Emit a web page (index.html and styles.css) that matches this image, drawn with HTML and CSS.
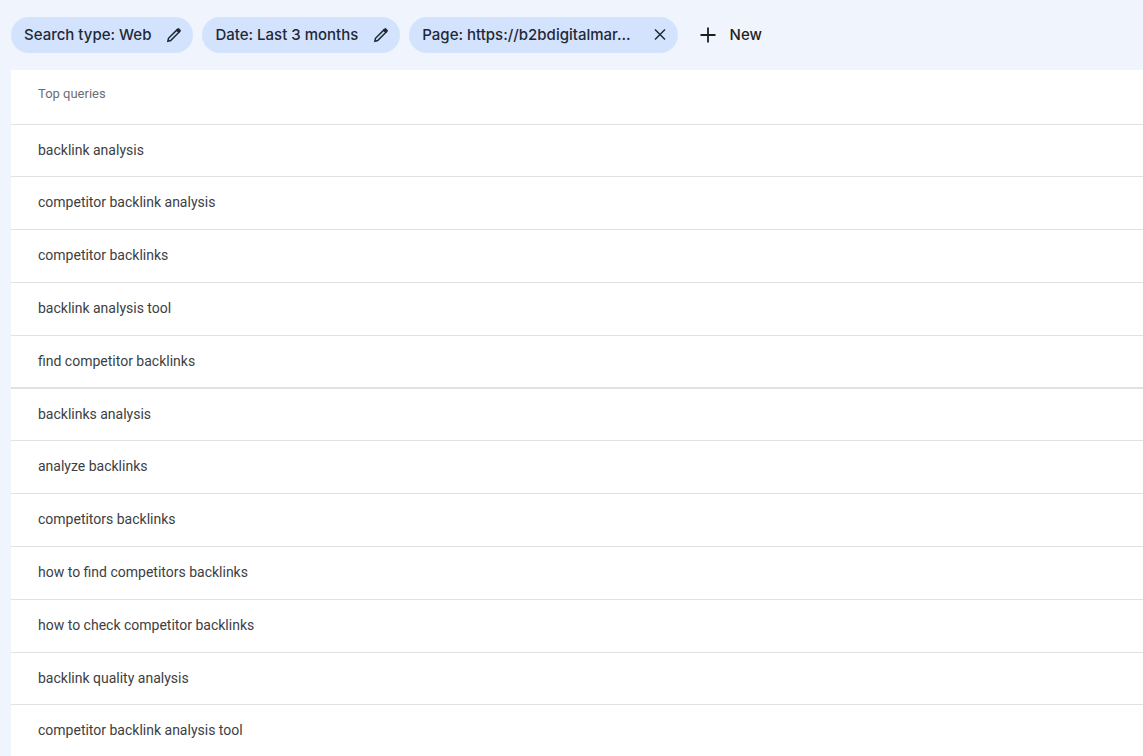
FILE: index.html
```
<!DOCTYPE html>
<html lang="en">
<head>
<meta charset="utf-8">
<meta name="viewport" content="width=device-width, initial-scale=1">
<title>Top queries</title>
<link rel="stylesheet" href="styles.css">
</head>
<body>
<header class="filters">
  <button class="chip" type="button">
    <span class="chip-label">Search type: Web</span>
    <svg class="icon icon-edit" viewBox="0 0 16 16" aria-hidden="true"><path class="stroke" d="M1.9 14.2l.6-2.9 8.2-8.2 2.2 2.2-8.2 8.2z"/><path d="M9.9 2.9l1.6-1.5q.8-.7 1.6 0l1.5 1.5q.7.8 0 1.6l-1.5 1.6z"/></svg>
  </button>
  <button class="chip" type="button">
    <span class="chip-label">Date: Last 3 months</span>
    <svg class="icon icon-edit" viewBox="0 0 16 16" aria-hidden="true"><path class="stroke" d="M1.9 14.2l.6-2.9 8.2-8.2 2.2 2.2-8.2 8.2z"/><path d="M9.9 2.9l1.6-1.5q.8-.7 1.6 0l1.5 1.5q.7.8 0 1.6l-1.5 1.6z"/></svg>
  </button>
  <button class="chip chip-page" type="button">
    <span class="chip-label">Page: https://b2bdigitalmar...</span>
    <svg class="icon" viewBox="0 0 18 18" aria-hidden="true"><path class="stroke" d="M4 3.5l10 10M14 3.5l-10 10"/></svg>
  </button>
  <button class="add" type="button">
    <svg class="icon" viewBox="0 0 18 18" aria-hidden="true"><path class="stroke plus" d="M9 1.5v15M1.5 9h15"/></svg>
    <span>New</span>
  </button>
</header>
<main class="panel">
  <table class="queries">
    <thead><tr><th scope="col">Top queries</th></tr></thead>
    <tbody>
      <tr><td>backlink analysis</td></tr>
      <tr><td>competitor backlink analysis</td></tr>
      <tr><td>competitor backlinks</td></tr>
      <tr><td>backlink analysis tool</td></tr>
      <tr class="group-end"><td>find competitor backlinks</td></tr>
      <tr><td>backlinks analysis</td></tr>
      <tr><td>analyze backlinks</td></tr>
      <tr><td>competitors backlinks</td></tr>
      <tr><td>how to find competitors backlinks</td></tr>
      <tr><td>how to check competitor backlinks</td></tr>
      <tr><td>backlink quality analysis</td></tr>
      <tr><td>competitor backlink analysis tool</td></tr>
    </tbody>
  </table>
</main>
</body>
</html>
```
FILE: styles.css
```
* {
  box-sizing: border-box;
}

body {
  margin: 0;
  background: #f0f4fc;
  color: #3c4043;
  font-family: Roboto, "Liberation Sans", sans-serif;
}

.filters {
  display: flex;
  align-items: center;
  gap: 9px;
  padding: 17px 11px;
}

.chip,
.add {
  display: flex;
  align-items: center;
  height: 36px;
  border: 0;
  color: #1f2937;
  font: 500 15px/20px Inter, Roboto, sans-serif;
  white-space: nowrap;
  cursor: pointer;
}

.chip {
  gap: 15px;
  padding: 0 11px 0 13px;
  border-radius: 18px;
  background: #d3e3fd;
}

.chip-page {
  gap: 20px;
  padding-right: 9px;
}

.add {
  gap: 13px;
  padding: 0 12px;
  background: transparent;
  color: #1f1f1f;
}

.icon {
  flex: none;
  width: 18px;
  height: 18px;
  fill: currentColor;
}

.icon-edit {
  width: 16px;
  height: 16px;
}

.stroke {
  fill: none;
  stroke: currentColor;
  stroke-width: 1.5;
}

.plus {
  stroke-width: 1.8;
}

.panel {
  margin-left: 11px;
  overflow: hidden;
  background: #fff;
}

.queries {
  width: 100%;
  border-collapse: separate;
  border-spacing: 0;
  text-align: left;
}

.queries th,
.queries td {
  height: 53px;
  padding: 0 27px 2px;
  border-bottom: 1px solid #dfe1e3;
  font-size: 14px;
  line-height: 20px;
}

.queries th {
  height: 55px;
  padding-bottom: 6px;
  color: #6b6f73;
  font-size: 13px;
  font-weight: 400;
}

.queries tbody tr:nth-child(5n + 1) td {
  height: 52px;
}

.queries .group-end td {
  border-bottom-width: 2px;
}
```
